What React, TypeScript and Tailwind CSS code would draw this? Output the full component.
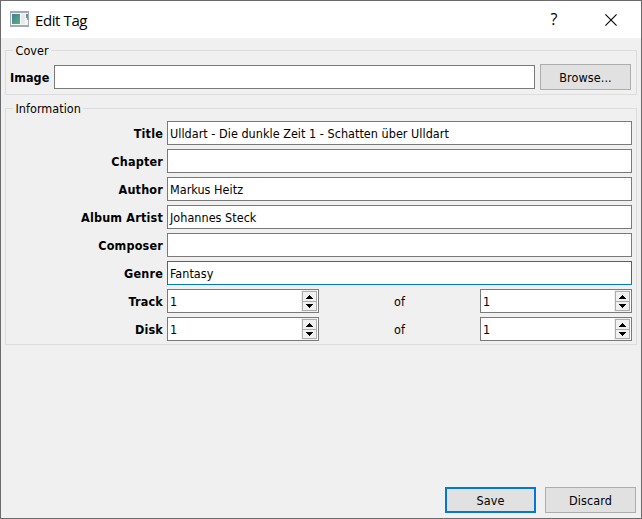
import type { ReactNode } from "react";

const bodyFont =
  "font-['DejaVu_Sans_Condensed','DejaVu_Sans',sans-serif] [font-stretch:condensed] tracking-[0.03px]";
const captionFont = "font-['Open_Sans','Noto_Sans',sans-serif] [font-stretch:normal]";

function Group({ title, className, children }: { title: string; className: string; children: ReactNode }) {
  return (
    <section className={`relative border border-[#dcdcdc] ${className}`}>
      <h2 className="absolute -top-[9px] left-[7px] h-[17px] bg-[#f0f0f0] pr-[2px] pl-[2.5px] text-[12.5px] leading-[17px] whitespace-nowrap">
        {title}
      </h2>
      {children}
    </section>
  );
}

function Field({ value, focused = false }: { value: string; focused?: boolean }) {
  return (
    <div
      className={`h-[24px] min-w-0 flex-1 border bg-white pt-px pl-[2px] leading-[22px] whitespace-nowrap ${
        focused ? "border-[#0078d7]" : "border-[#7a7a7a]"
      }`}
    >
      {value}
    </div>
  );
}

function Label({ children }: { children: ReactNode }) {
  return (
    <div className="h-[24px] w-[157px] pt-px text-right text-[12.5px] leading-[24px] font-bold tracking-[0.18px] whitespace-nowrap">
      {children}
    </div>
  );
}

function Arrow({ up = false }: { up?: boolean }) {
  return (
    <svg width="7" height="4" viewBox="0 0 7 4" shapeRendering="crispEdges">
      <path d={up ? "M3 0h1v1h1v1h1v1h1v1H0V3h1V2h1V1h1z" : "M0 0h7v1H6v1H5v1H4v1H3V3H2V2H1V1H0z"} />
    </svg>
  );
}

function Spinner({ value }: { value: string }) {
  return (
    <div className="flex h-[24px] w-[152px] items-start justify-between border border-[#7a7a7a] bg-white pr-[1px] pl-[2px]">
      <span className="pt-px leading-[22px]">{value}</span>
      <div className="flex h-[22px] w-[16px] items-center justify-end bg-[#f0f0f0]">
        <div className="flex h-[20px] w-[15px] flex-col border border-[#acacac] bg-[#f0f0f0]">
          <div className="flex h-[10px] items-center justify-center border-b border-[#acacac]">
            <Arrow up />
          </div>
          <div className="flex h-[8px] items-center justify-center">
            <Arrow />
          </div>
        </div>
      </div>
    </div>
  );
}

function Button({ children, primary = false }: { children: ReactNode; primary?: boolean }) {
  return (
    <button
      className={`flex h-[26px] w-[91px] shrink-0 items-start justify-center bg-[#e1e1e1] text-[12.5px] tracking-[0.1px] ${
        primary ? "border-2 border-[#0078d7] pt-px leading-[22px]" : "border border-[#adadad] pt-px leading-[24px]"
      }`}
    >
      {children}
    </button>
  );
}

const fields = [
  { label: "Title", value: "Ulldart - Die dunkle Zeit 1 - Schatten über Ulldart" },
  { label: "Chapter", value: "" },
  { label: "Author", value: "Markus Heitz" },
  { label: "Album Artist", value: "Johannes Steck" },
  { label: "Composer", value: "" },
  { label: "Genre", value: "Fantasy", focused: true },
];

export default function App() {
  return (
    <div className={`flex h-[519px] w-[642px] flex-col border border-[#6b6b6b] bg-[#f0f0f0] text-[12.5px] text-black ${bodyFont}`}>
      <header className="flex h-[37px] shrink-0 items-center bg-white pl-[9px]">
        <svg className="-mt-px" width="19" height="16" viewBox="0 0 19 16" shapeRendering="crispEdges">
          <defs>
            <linearGradient id="screen" x1="0" y1="0" x2="1" y2="1">
              <stop offset="0" stopColor="#4679a5" />
              <stop offset="1" stopColor="#56b66d" />
            </linearGradient>
            <linearGradient id="strip" x1="0" y1="0" x2="0" y2="1">
              <stop offset="0" stopColor="#4d86b4" />
              <stop offset="1" stopColor="#65bf76" />
            </linearGradient>
          </defs>
          <path d="M0 0h19v16H0z" fill="#a3a9ad" />
          <path d="M1 2h17v12H1z" fill="#f3f5f6" />
          <path d="M2 3h8v10H2z" fill="url(#screen)" />
          <path d="M11 3h4v10h-4z" fill="#e7e9eb" />
          <path d="M16 3h2v6h-1V7h-1z" fill="url(#strip)" />
        </svg>
        <h1 className={`ml-[6px] text-[15px] leading-[20px] tracking-[-0.4px] ${captionFont}`}>Edit Tag</h1>
        <span className={`-mt-[2px] ml-auto w-[12px] text-center text-[16px] leading-[20px] ${captionFont}`}>?</span>
        <svg className="mr-[24px] ml-[45px]" width="12" height="12" viewBox="0 0 12 12">
          <path d="M.4.4l11.2 11.2M11.6.4L.4 11.6" stroke="black" strokeWidth="1.1" />
        </svg>
      </header>

      <main className="flex flex-1 flex-col px-[4px] pt-[12px] pb-[5px]">
        <Group title="Cover" className="h-[45px] pt-[13px] pr-[5px] pl-[4px]">
          <div className="flex items-center">
            <div className="h-[24px] w-[44px] pt-px leading-[24px] font-bold">Image</div>
            <Field value="" />
            <div className="ml-[5px] flex">
              <Button>Browse...</Button>
            </div>
          </div>
        </Group>

        <Group title="Information" className="mt-[13px] h-[237px] pt-[12px] pr-[4px] pl-[0px]">
          <div className="flex flex-col gap-[4px]">
            {fields.map((f) => (
              <div key={f.label} className="flex gap-[4px]">
                <Label>{f.label}</Label>
                <Field value={f.value} focused={f.focused} />
              </div>
            ))}
            {["Track", "Disk"].map((label) => (
              <div key={label} className="flex items-center">
                <Label>{label}</Label>
                <div className="ml-[4px]">
                  <Spinner value="1" />
                </div>
                <span className="h-[24px] flex-1 pt-px text-center leading-[24px]">of</span>
                <Spinner value="1" />
              </div>
            ))}
          </div>
        </Group>

        <footer className="mt-auto flex justify-end gap-[9px] pr-px">
          <Button primary>Save</Button>
          <Button>Discard</Button>
        </footer>
      </main>
    </div>
  );
}
